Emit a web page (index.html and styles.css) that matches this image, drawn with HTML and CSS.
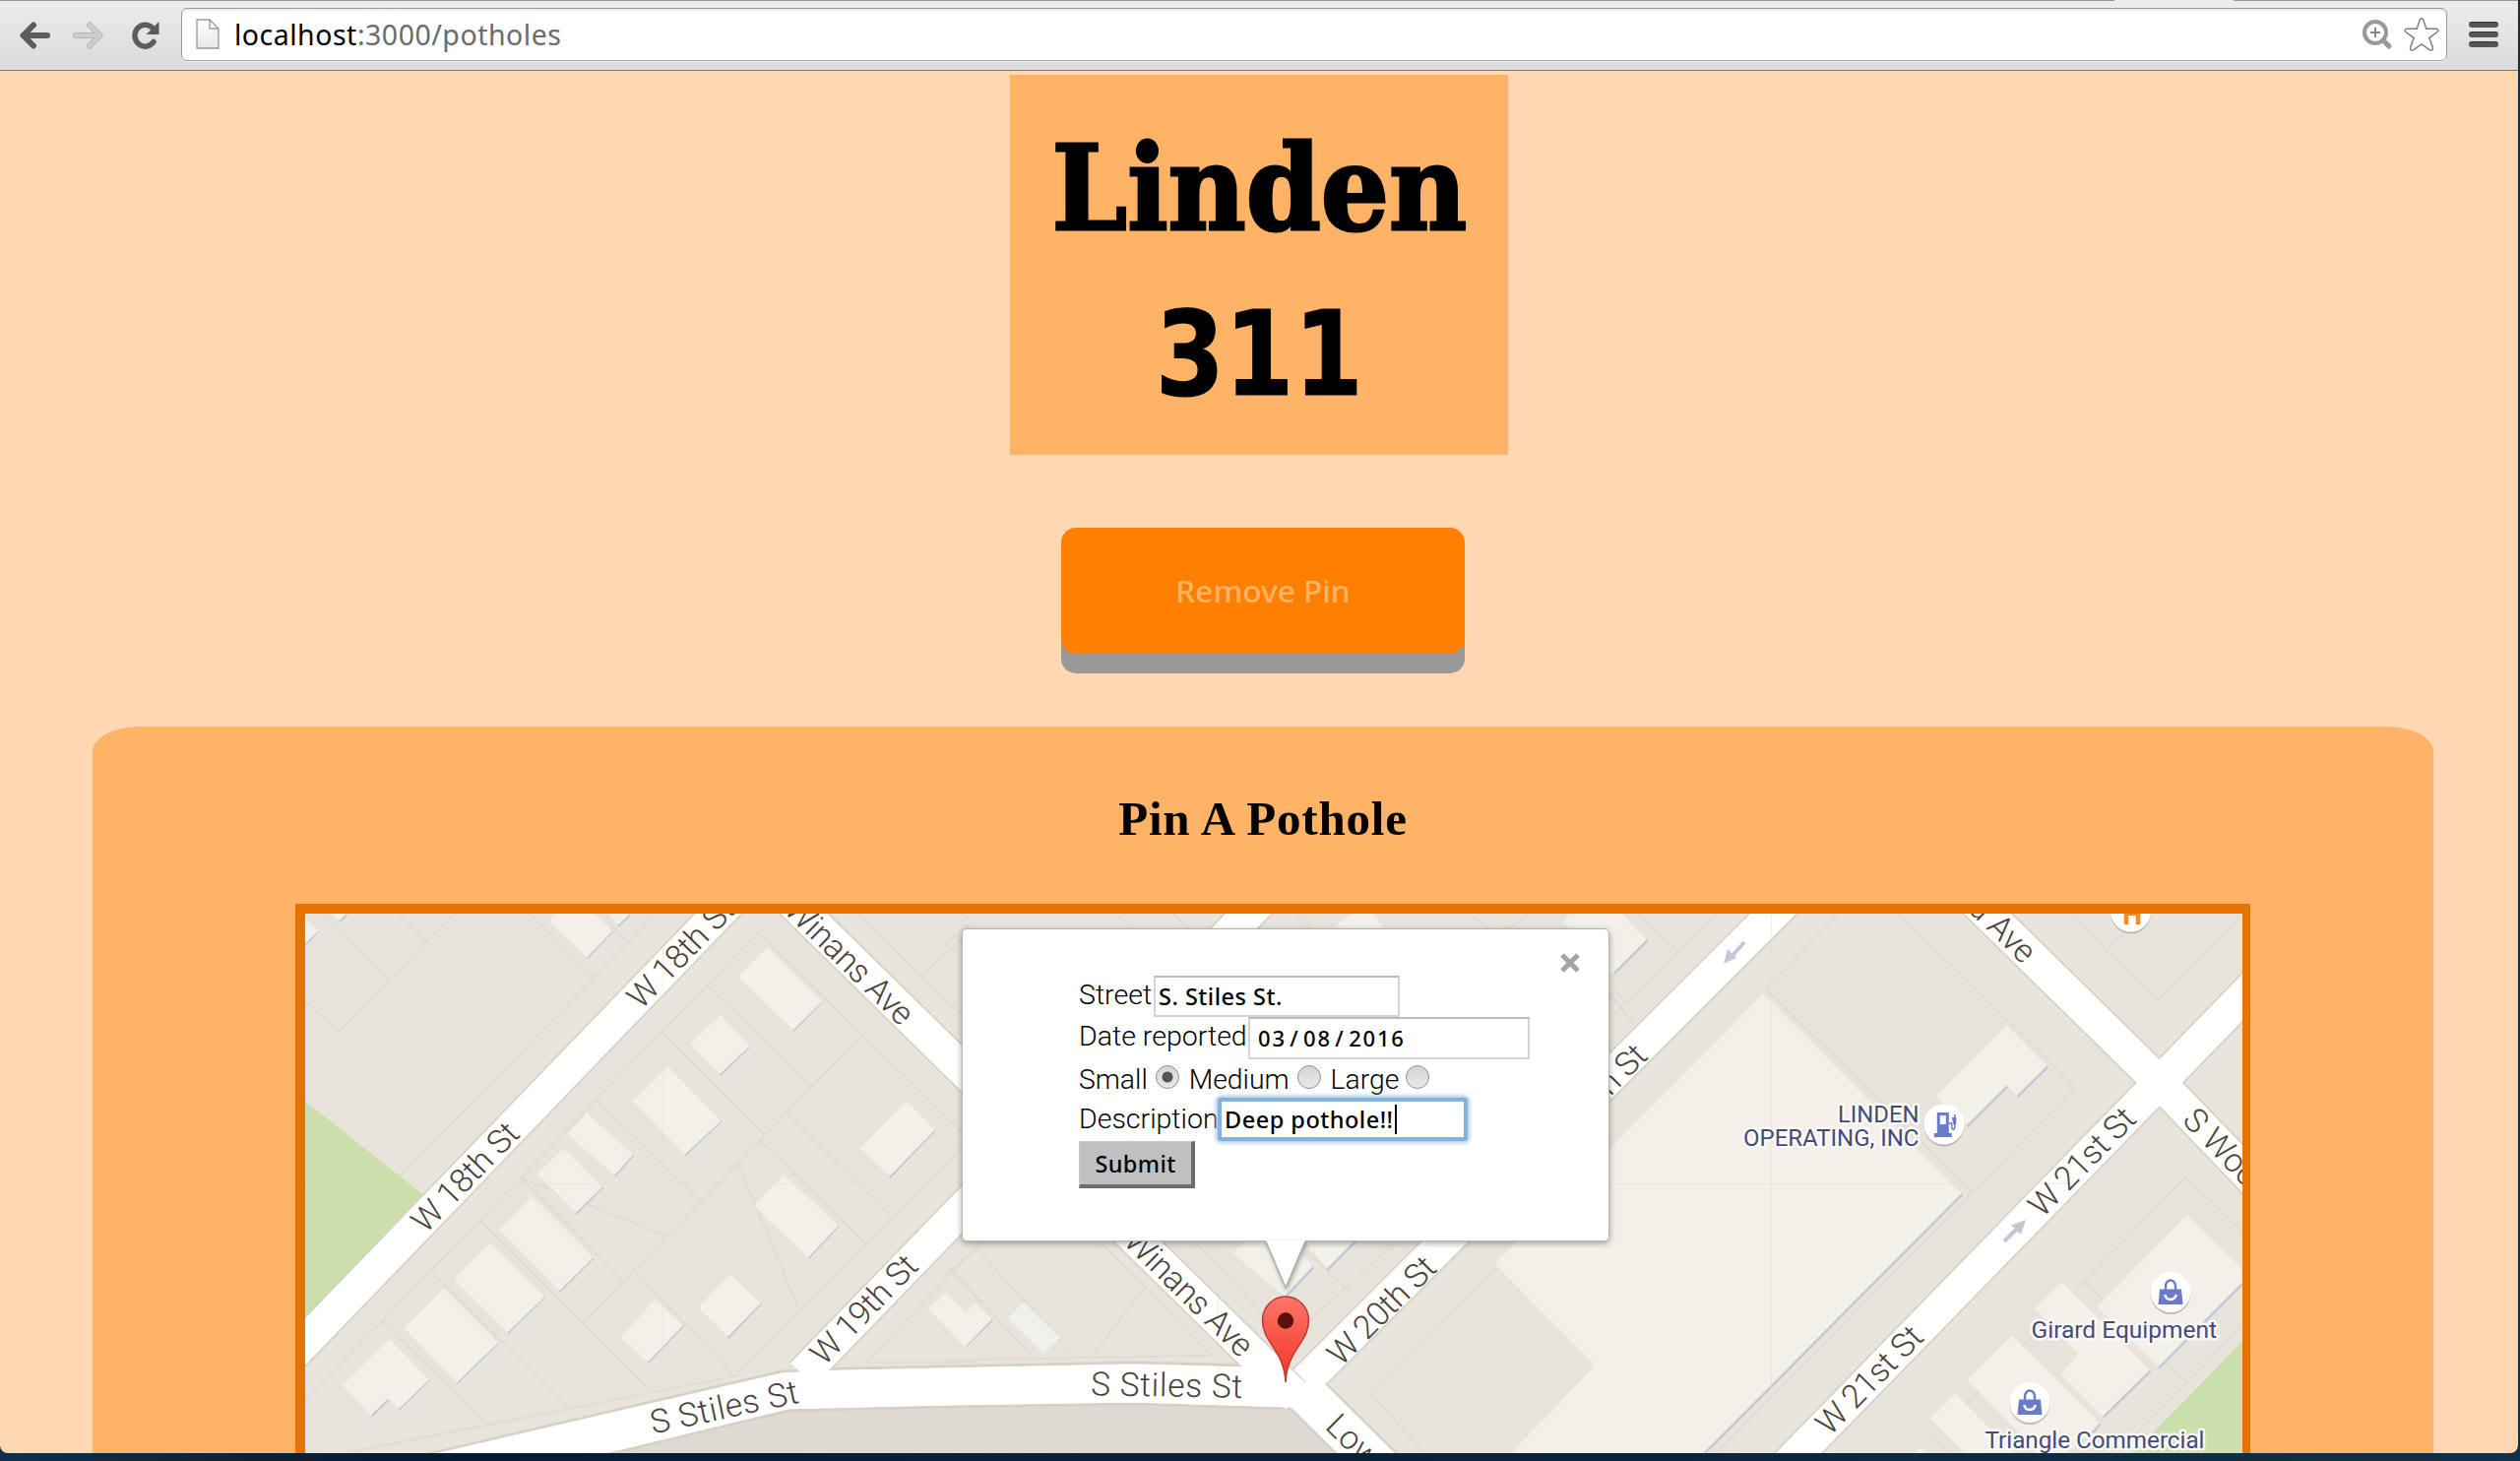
FILE: index.html
```html
<!DOCTYPE html>
<html lang="en">
<head>
<meta charset="utf-8">
<title>Linden 311</title>
<link rel="stylesheet" href="styles.css">
</head>
<body>
<div class="window">
  <header class="toolbar">
    <div class="tab-gap"></div>
    <nav class="nav">
      <svg class="ico" width="32" height="28" viewBox="0 0 32 28"><path d="M15 3.500L4.500 14 15 24.500M5 14H29" fill="none" stroke="#5c5c5c" stroke-width="6" stroke-linecap="round" stroke-linejoin="round"/></svg>
      <svg class="ico" width="32" height="28" viewBox="0 0 32 28"><path d="M17 3.500L27.500 14 17 24.500M27 14H3" fill="none" stroke="#b5b5b5" stroke-width="6" stroke-linecap="round" stroke-linejoin="round"/><path d="M17 3.500L27.500 14 17 24.500M27 14H3" fill="none" stroke="#cdcdcd" stroke-width="4" stroke-linecap="round" stroke-linejoin="round"/></svg>
      <svg class="ico" width="28" height="28" viewBox="0 0 28 28"><path d="M22 20.500A10.500 11 0 1 1 20.500 6" fill="none" stroke="#5c5c5c" stroke-width="5.500" stroke-linecap="round"/><path d="M27.500 0V13H14.500Z" fill="#5c5c5c"/></svg>
    </nav>
    <div class="omnibox">
      <svg class="page-icon" width="24" height="32" viewBox="0 0 24 32"><defs><linearGradient id="pg" x2="0" y2="1"><stop stop-color="#fff"/><stop offset="1" stop-color="#e8e8e8"/></linearGradient></defs><path d="M1 1H14L23 10V30H1ZM14 1V10H23" fill="url(#pg)" stroke="#999" stroke-width="1.300"/></svg>
      <span class="url">localhost<span class="path">:3000/potholes</span></span>
      <svg class="lens" width="32" height="32" viewBox="0 0 32 32"><circle cx="14" cy="14" r="11" fill="none" stroke="#999" stroke-width="4"/><path d="M22.500 22.500L28 28" stroke="#999" stroke-width="5" stroke-linecap="round"/><path d="M14 9V19M9 14H19" stroke="#888" stroke-width="2"/></svg>
      <svg class="star" width="36" height="36" viewBox="0 0 36 36"><path d="M16.300 2.800Q18 0 19.700 2.800L22.800 12.200H33Q36.200 13.200 34 15.500L25.800 21.600 29.500 31.500Q29.500 35 26.500 33.800L18 28 9.500 33.800Q6.500 35 6.500 31.500L10.200 21.600 2 15.500Q-.2 13.200 3 12.200H13.200Z" fill="#fff" stroke="#808080" stroke-width="1.500"/></svg>
    </div>
    <div class="menu"><i></i><i></i><i></i></div>
  </header>

  <main class="page">
    <h1 class="title"><span class="word">Linden</span><span class="num">311</span></h1>
    <button class="remove">Remove Pin</button>
    <section class="panel">
      <h2 class="heading">Pin A Pothole</h2>
      <div class="map">
        <svg class="canvas" viewBox="310 928 1968 548" width="1968" height="548">
          <defs>
            <g id="roads">
              <path d="M285 1389L760 896.500"/>
              <path d="M786 898L1318 1420"/>
              <path d="M1326 1403L1836 893.500"/>
              <path d="M815 1396L1290 905.500"/>
              <path d="M1790 1514L2194 1099.500 2300 990.500"/>
              <path d="M1989 898.500L2194 1099.500 2300 1210"/>
            </g>
            <linearGradient id="pin" x2="0" y2="1"><stop stop-color="#fd7567"/><stop offset="1" stop-color="#f43325"/></linearGradient>
            <g id="bag"><ellipse cy="1.500" rx="20.500" ry="21" fill="#bdb9b4"/><circle r="20.500" fill="#fff"/><path d="M-11-3H11L12.500 12.500H-12.500Z" fill="#6b7bc8"/><path d="M-5-2V-6A5 6 0 0 1 5-6V-2" fill="none" stroke="#6b7bc8" stroke-width="2.400"/><path d="M-5.500 2.500A5.500 5 0 0 0 5.500 2.500" fill="none" stroke="#fff" stroke-width="2.600"/></g>
          </defs>
          <rect x="310" y="928" width="1968" height="548" fill="#e8e4dc"/>
          <path d="M439 1476L801 1410 1152 1400 1325 1405 1390 1476Z" fill="#dedad2"/>

          <!-- parcels and buildings, west side -->
          <g transform="translate(290 910) scale(.44643 .36607)">
            <path class="park" d="M45 570L312 828 45 1168Z"/>
            <path class="lot" d="M45 290L120 378 385 48M80 48L235 235M255 48L320 125M260 780L845 48M555 48L702 225M735 70L778 130M45 1400L1075 102 1538 655M962 250L1194 528M858 380L1088 660M710 568L943 846M535 782L867 942M535 782L766 1065M443 900L835 1378M330 1040L645 1420M220 1180L457 1466M680 1183L1310 388M795 1040L1020 1330M1030 742L1166 1140M1082 680L1316 960M1142 605L1374 884M1028 1322L1538 700M140 1545L1030 1330M1320 1295L1600 940M1320 1295H1568M1515 1040L1640 1200M1300 48L1538 330M1447 220L1568 90M1540 48L1568 80"/>
            <path class="shade" d="M45 134L74 98M123 70L140 50M686 172L744 97M756 84L785 50M1155 374L1221 292M989 497L1057 416M909 720L991 624M749 778L791 718M661 882L721 808M624 1097L700 1004M505 1214L589 1113M390 1352L484 1240M196 1443L235 1396M258 1425L326 1343M1375 781L1478 649M1190 1005L1257 916M824 1296L905 1192M1007 1226L1081 1131M1546 1251L1608 1176"/>
            <path class="house" d="M45 60L74 98 45 132ZM105 48H140L123 68ZM625 38H695L744 97 686 170 600 70ZM735 48H785L756 82ZM1097 142L1221 292 1155 372 1030 224ZM989 331L1057 416 989 494 921 412ZM870 473L991 624 909 718 790 570ZM686 604L791 718 749 775 641 660ZM634 700L721 808 661 879 573 772ZM562 834L700 1004 624 1095 486 926ZM467 962L589 1113 505 1212 384 1063ZM360 1090L484 1240 390 1350 270 1200ZM236 1229L326 1343 258 1423 235 1394 194 1441 130 1358ZM1413 568L1478 649 1375 778 1308 700ZM1134 772L1257 916 1190 1003 1066 860ZM842 1120L905 1192 824 1294 763 1224ZM1012 1049L1081 1131 1007 1223 939 1142Z"/>
          </g>

          <!-- parcels and buildings, centre -->
          <g transform="translate(960 1230) scale(.44643 .33333)">
            <path class="lot" d="M70 110L295 445M15 180L205 452M70 118L0 195M0 455L605 440 350 90M455 235L335 440M565 90L780 395 1030 90M820 120L918 242M1090 738L972 560 1255 175M1000 90L1015 118"/>
            <path class="house" d="M-38 298L0 250 47 308 70 282 106 331 45 415Z"/>
            <path d="M180 278L261 386 224 436 143 326Z" fill="#eff1eb"/>
            <path class="house" d="M685 90L655 130 775 262 838 172 785 90ZM815 90L870 178 935 90Z"/>
            <path class="shade" d="M775 262L838 172M870 180L935 92"/>
          </g>
          <g transform="translate(960 920) scale(.44643 .33333)">
            <path class="lot" d="M-5 120L60 50 40 24M390 24L440 90M520 24L560 80M800 24L850 90M1190 24L1260 90 1330 24M1512 270L1568 360M1560 10L1480 140"/>
            <path class="house" d="M925 24H975L1000 72H880ZM1420 24L1408 50 1425 72H1520V24Z"/>
          </g>

          <!-- parcels and buildings, east side -->
          <g transform="translate(1640 910) scale(.43367 .36607)">
            <path class="lot" d="M0 330L240 48M50 48L148 152M0 262L28 296M355 258L525 48M355 258L838 820M665 48L1080 532 240 1545M1065 48L1272 290 1470 52M1154 148L1190 108M1470 930L1338 780 800 1440M1100 1070L1342 1350M1342 1350L1470 1195M745 1500L785 1545M1342 1350L1200 1520M862 1360L900 1400"/>
            <path class="house" d="M-40 48H17L77 124-5 220-40 200ZM920 360L1015 474 945 556 921 528 826 640 754 556Z"/>
            <path class="house" d="M348 272L815 828 213 1545H-240L-46 1303-281 1019 0 690Z"/>
            <path class="house" d="M1342 886L1475 1040V1075L1276 1310 1130 1140ZM1048 1071L985 1145 1088 1270 1045 1328 1146 1446 1256 1318ZM931 1220L827 1345 995 1545H1060L1138 1465ZM799 1380L739 1450 820 1545H935ZM718 1530L705 1545H730Z"/>
            <path class="shade" d="M0 215L77 124M815 828L213 1545M921 528L826 640M1015 474L945 556M1275 1310L1470 1078M1146 1446L1256 1318M1120 1490L1138 1465"/>
            <path class="park" d="M1475 1232L1215 1545H1475Z"/>
          </g>

          <g class="casing"><use href="#roads"/><path d="M1326 1415L1410 1498" stroke-width="46"/></g>
          <path d="M300 1508.500L439.600 1476 794.500 1393 843.600 1390.600 1152 1384 1265 1387 1349 1409 1312.700 1431 1152 1426 960 1429 801 1432.700 622.600 1476 450 1518Z" fill="#fff" stroke="#d6d1c4" stroke-width="3"/>
          <g class="paving"><use href="#roads"/><path d="M1326 1415L1410 1498" stroke-width="41"/></g>
          <path d="M439.600 1477L794.500 1394.500 843.600 1392 1152 1385.500 1265 1388.500 1349 1409 1312.700 1429.500 1152 1424.500 960 1427.500 801 1431.200 622.600 1474.500Z" fill="#fff"/>
          <path d="M673.500 928V1476M1237.500 1200V1476M1799.500 928V1476M310 1202.500H980M1635 1202.500H2278" stroke="#dcdcd6" stroke-opacity=".45"/>

          <g class="street">
            <text transform="translate(472.500 1195.500) rotate(-46)" y="11.500" text-anchor="middle" textLength="140">W 18th St</text>
            <text transform="translate(691.500 968) rotate(-46)" y="11.500" text-anchor="middle" textLength="140">W 18th St</text>
            <text transform="translate(877.500 1330) rotate(-46)" y="11.500" text-anchor="middle" textLength="140">W 19th St</text>
            <text transform="translate(1403.500 1331) rotate(-45)" y="11.500" text-anchor="middle" textLength="140">W 20th St</text>
            <text transform="translate(1667 1066) rotate(-45.500)" y="11.500" text-anchor="end" textLength="140">W 20th St</text>
            <text transform="translate(2115 1180) rotate(-45.700)" y="11.500" text-anchor="middle" textLength="139">W 21st St</text>
            <text transform="translate(1899 1401.500) rotate(-45.700)" y="11.500" text-anchor="middle" textLength="139">W 21st St</text>
            <text transform="translate(923 1035) rotate(44.500)" y="11.500" text-anchor="end" textLength="168">Winans Ave</text>
            <text transform="translate(1268 1372) rotate(44.500)" y="11.500" text-anchor="end" textLength="168">Winans Ave</text>
            <text transform="translate(2063 972) rotate(44.500)" y="11.500" text-anchor="end">S Wood Ave</text>
            <text transform="translate(2224 1131) rotate(46)" y="11.500">S Wood Ave</text>
            <text transform="translate(1353 1442) rotate(44.500)" y="11.500">Lower Rd</text>
            <text transform="translate(738 1440.500) rotate(-12)" text-anchor="middle" textLength="153">S Stiles St</text>
            <text transform="translate(1185 1418.500) rotate(1)" text-anchor="middle" textLength="154">S Stiles St</text>
          </g>
          <g fill="#c7c5d6" stroke="#c7c5d6">
            <path d="M1772 957L1758 973" stroke-width="4"/><path d="M1751 979L1755 964 1764 973Z" stroke="none"/>
            <path d="M2036 1261L2051 1246" stroke-width="4"/><path d="M2058 1239L2043 1244.500 2053 1254Z" stroke="none"/>
          </g>

          <g transform="translate(1974.800 1142)"><ellipse cy="1.500" rx="20.500" ry="21" fill="#bdb9b4"/><circle r="20.500" fill="#fff"/><path d="M-7-12H5V9H8V13H-10V9H-7ZM-4-9V0H2V-9Z" fill="#6b7bc8" fill-rule="evenodd"/><path d="M5-1H8V4Q10 7 11 3V-10" fill="none" stroke="#6b7bc8" stroke-width="1.500"/><path d="M8-7H12.500V0H9.500Z" fill="#6b7bc8"/></g>
          <use href="#bag" transform="translate(2205 1312.500)"/>
          <use href="#bag" transform="translate(2062 1424.500)"/>
          <g transform="translate(2164.500 926)"><ellipse cy="1.500" rx="20.500" ry="21" fill="#bdb9b4"/><circle r="20.500" fill="#fff"/><path d="M-4.500 13V0M7.500 13V0" fill="none" stroke="#ff8a1c" stroke-width="4.500"/><path d="M-6.500 2V4H9.700V2Z" fill="#ff8a1c"/></g>
          <g class="poi">
            <text x="1867" y="1140" textLength="82.500" lengthAdjust="spacingAndGlyphs">LINDEN</text>
            <text x="1771" y="1163.500" textLength="178.500" lengthAdjust="spacingAndGlyphs">OPERATING, INC</text>
            <text x="2063.500" y="1359" textLength="188.500" lengthAdjust="spacingAndGlyphs">Girard Equipment</text>
            <text x="2016.500" y="1470.500" textLength="223" lengthAdjust="spacingAndGlyphs">Triangle Commercial</text>
          </g>
          <path d="M1306 1404C1304.500 1371 1282.500 1364 1282.500 1341A23.500 24 0 0 1 1329.500 1341C1329.500 1364 1307.500 1371 1306 1404Z" fill="url(#pin)" stroke="#b93a32" stroke-width="1.500"/>
          <circle cx="1306" cy="1341.500" r="8.200" fill="#590f0c"/>
        </svg>

        <div class="popup">
          <svg class="close" width="22" height="22" viewBox="0 0 22 22"><path d="M3 3L19 19M19 3L3 19" stroke="#a3a3a3" stroke-width="5"/></svg>
          <form class="form">
            <div class="row street-row"><label>Street</label><span class="field f-street">S. Stiles St.</span></div>
            <div class="row date-row"><label>Date reported</label><span class="field f-date">03<i>/</i>08<i>/</i>2016</span></div>
            <div class="row size-row"><label>Small</label><i class="radio on"></i><label>Medium</label><i class="radio"></i><label>Large</label><i class="radio"></i></div>
            <div class="row desc-row"><label>Description</label><span class="field f-desc">Deep pothole!!<i class="caret"></i></span></div>
            <button class="submit" type="button">Submit</button>
          </form>
          <svg class="tail" width="40" height="49" viewBox="0 0 40 49"><path d="M0 0L20 48 40 0Z" fill="#fff"/><path d="M0 1L20 48 40 1" fill="none" stroke="#b0b0ac" stroke-width="1.500"/></svg>
        </div>
      </div>
    </section>
  </main>
</div>
</body>
</html>
```

FILE: styles.css
```css
* { box-sizing: border-box; }
body { margin: 0; width: 2560px; height: 1484px; overflow: hidden; background: linear-gradient(90deg, #123049, #061b30 15%, #0b2237 60%, #123149); }
.window { width: 2558px; height: 1476px; display: flex; flex-direction: column; overflow: hidden; border-radius: 0 0 8px 8px; background: #ffd8b3; }

.toolbar { position: relative; flex: none; height: 72px; display: flex; align-items: flex-start; border-top: 1px solid #979797; border-bottom: 1px solid #777; background: linear-gradient(#ececec, #dadada); }
.tab-gap { position: absolute; left: 2148px; top: -1px; width: 121px; height: 1px; background: #ececec; }
.nav { display: flex; gap: 23px; padding: 21px 0 0 19px; width: 184px; flex: none; }
.nav .ico:last-child { margin-left: 5px; }
.omnibox { width: 2302px; height: 54px; margin-top: 7px; display: flex; align-items: center; padding: 0 7px 0 14px; background: #fff; border: 1px solid #9c9c9c; border-radius: 6px; box-shadow: inset 0 2px 2px #e8e8e8, 0 1px 0 #f3f3f3; }
.url { flex: 1; margin-left: 15px; font: 28.500px/54px "Noto Sans", sans-serif; color: #000; letter-spacing: .5px; }
.path { color: #6b6b6b; }
.lens { margin-right: 11px; }
.menu { display: flex; flex-direction: column; gap: 4px; padding: 21px 0 0 22px; }
.menu i { width: 30px; height: 6px; border-radius: 3px; background: #565656; border-top: 1px solid #333; }

.page { flex: 1; display: flex; flex-direction: column; align-items: center; padding-top: 4px; min-height: 0; }
.title { margin: 0; width: 506px; height: 386px; padding-top: 31px; background: #ffb366; display: flex; flex-direction: column; align-items: center; color: #000; font-size: 119px; font-weight: 700; line-height: 168px; flex: none; }
.word { font-family: "DejaVu Serif", serif; transform: scaleX(.915); -webkit-text-stroke: 3px #000; }
.num { font-family: "DejaVu Sans", sans-serif; transform: translateY(1px) scaleX(.85); -webkit-text-stroke: 1px #000; }
.remove { flex: none; width: 410px; height: 128px; margin: 74px 0 0 8px; padding: 0 0 2px; border: 0; border-radius: 15px; background: #ff8000; box-shadow: 0 20px 0 #999; color: #ffb366; font: 500 31.600px "Noto Sans", sans-serif; }
.panel { flex: none; width: 2378px; height: 900px; margin: 74px 0 0 8px; display: flex; flex-direction: column; padding: 64px 0 0 206px; background: #ffb366; border-radius: 48px 48px 0 0 / 25px 25px 0 0; }
.heading { margin: 0 0 56px -206px; text-align: center; font: 700 49px/60px "Liberation Serif", serif; color: #000; letter-spacing: .8px; }
.map { position: relative; flex: none; width: 1986px; height: 700px; border: solid #e67300; border-width: 10px 8px 10px 10px; }
.canvas { display: block; }
.park { fill: #cbdfab; }
.lot { fill: none; stroke: #e0dbd4; stroke-width: 2; vector-effect: non-scaling-stroke; }
.house { fill: #f2f0e9; }
.shade { fill: none; stroke: #c6c7d8; stroke-width: 2.500; vector-effect: non-scaling-stroke; }
.casing { fill: none; stroke: #d6d1c4; stroke-width: 36.500; }
.paving { fill: none; stroke: #fff; stroke-width: 33; }
.street { font: 300 33.500px Roboto, sans-serif; fill: #4a4239; }
.poi { font: 450 24px Roboto, sans-serif; fill: #444a78; stroke: #fbfaf6; stroke-width: 5px; stroke-linejoin: round; paint-order: stroke; }

.popup { position: absolute; left: 667px; top: 15px; width: 658px; height: 318px; padding: 47px 0 0 118px; background: #fff; border: 1px solid #b4b4b0; border-radius: 5px; box-shadow: 0 2px 6px rgba(0,0,0,.35); }
.tail { position: absolute; left: 308px; top: 316px; filter: drop-shadow(1px 2px 2px rgba(0,0,0,.3)); }
.close { position: absolute; left: 606px; top: 23px; }
.form { display: flex; flex-direction: column; font: 300 28.500px Roboto, sans-serif; color: #000; }
.row { display: flex; align-items: flex-start; white-space: nowrap; }
.field { display: flex; align-items: center; flex: none; padding-bottom: 1px; border: 2px solid #d4d4d4; border-top-color: #bbb; background: #fff; font: 500 23.500px "Noto Sans", sans-serif; letter-spacing: .5px; }
.street-row { height: 42px; line-height: 40px; }
.street-row label { width: 76px; }
.f-street { width: 250px; height: 42px; padding-left: 3px; }
.date-row { height: 43px; line-height: 40px; }
.date-row label { width: 172px; }
.f-date { width: 286px; height: 43px; padding-left: 8px; font-size: 22px; letter-spacing: 1.800px; }
.f-date i { font-style: normal; margin: 0 3.500px; }
.size-row { height: 43px; line-height: 42px; align-items: flex-start; }
.size-row label { font-size: 28.300px; }
.radio { width: 24px; height: 24px; margin: 6px 10px 0 8px; border: 1px solid #8e8e8e; border-radius: 50%; background: linear-gradient(#d4d4d4, #e9e9e9); flex: none; }
.radio:last-child { margin-left: 7px; }
.radio.on { background: radial-gradient(circle, #555 0 5px, transparent 6px), linear-gradient(#d4d4d4, #e9e9e9); }
.desc-row { height: 40px; line-height: 36px; }
.desc-row label { width: 141px; }
.f-desc { width: 254px; height: 44px; margin-top: -4px; padding-left: 3px; border: 4px solid #86b3de; border-radius: 3px; box-shadow: 0 0 4px 2px #a9caea; }
.caret { width: 2px; height: 30px; background: #000; margin-left: 1px; }
.submit { width: 118px; height: 48px; padding: 0; border: solid; border-width: 1px 4px 4px 1px; border-color: #c8c8c8 #6d6d6d #6d6d6d #c8c8c8; background: #c0c0c0; color: #000; font: 500 23.500px "Noto Sans", sans-serif; letter-spacing: .4px; }
```
